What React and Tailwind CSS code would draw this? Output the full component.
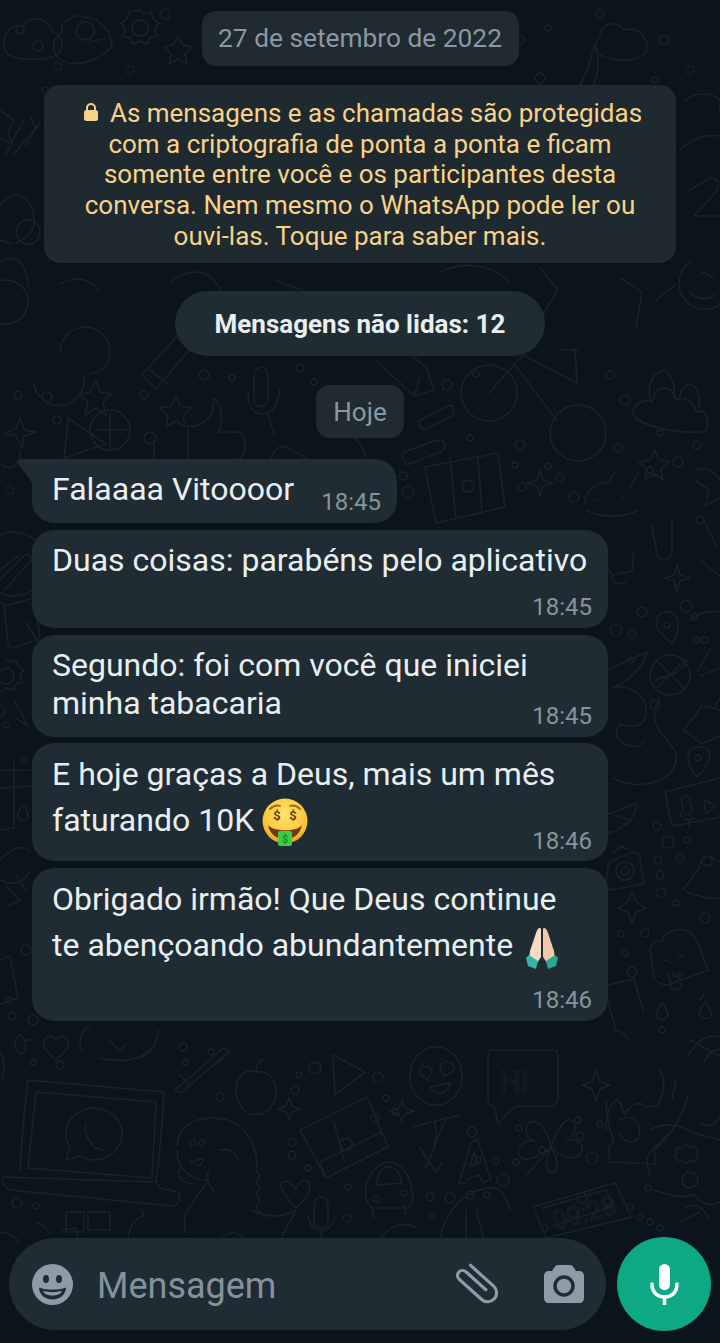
import React from 'react';

// wallpaper dots: x, y, r
const DOTS = [
  [38,46,5],[58,66,4],[45,90,3],[20,30,4],[130,70,4],[165,14,5],[520,40,4],[548,28,3],[540,78,5],[600,14,4],[664,40,5],[690,70,4],[655,80,3],
  [18,395,4],[47,397,5],[57,420,4],[144,395,4],[204,375,5],[232,378,3],[300,368,4],[314,382,3],[447,385,5],[476,374,3],[610,375,4],[625,400,5],
  [470,438,3],[520,445,5],[548,466,3],[618,448,4],[660,433,3],[697,445,4],[678,462,5],[515,465,3],[522,487,4],[560,478,4],[574,497,5],[650,470,3],
  [403,476,4],[408,492,6],[700,520,4],[10,490,4],
  [686,606,6],[642,612,5],[694,617,3],[616,630,6],[632,634,4],[696,640,3],[655,705,5],[631,660,3],[705,640,3],
  [657,826,4],[668,842,6],[687,840,3],[658,860,4],[660,875,4],[680,858,4],[661,893,5],[676,903,3],[705,918,5],[645,933,4],[621,934,3],[625,953,3],[632,972,5],[662,1030,3],
  [24,760,3],[26,950,5],[33,1020,5],[8,1000,3],
  [33,1062,3],[60,1065,4],[183,1047,4],[211,1052,3],[185,1062,3],[220,1097,4],[299,1075,3],[315,1068,6],[295,1090,4],[378,1077,5],[386,1098,3],[375,1118,4],[395,1112,3],[308,1168,3],[292,1142,4],[292,1155,4],
  [472,1132,5],[478,1160,3],[503,1180,6],[496,1161,3],[516,1162,3],[519,1128,3],[578,1120,3],[580,1136,4],[592,1158,6],[600,1124,3],[582,1198,5],[630,1207,3],[648,1188,3],[542,1150,3],[430,1197,4],[450,1198,5],[432,1216,3],[470,1195,4],[487,1195,3],[650,1222,3],
  [348,1187,3],[347,1218,4],[17,1203,5],[36,1206,3],[545,1228,3],[640,1217,3],[660,1228,3],
];

// wallpaper outlines, page coordinates
const DOODLES = [
  // top
  'M6 52c-8-14 4-30 18-26 6-12 26-8 28 6 12 2 14 20 2 24-8 4-42 6-48-4z',
  'M58 58c-8-10-4-22 4-26-2-12 14-20 26-14 12 0 24 14 24 28-14 18-42 22-54 12z',
  'M85 22a9 9 0 1 0 .1 0zM90 42l16-4',
  'M140 10l4 4 7-2 2 7 6 4-4 6 2 7-7 2-3 6-7-3-7 3-3-6-7-2 2-7-4-6 6-4 2-7zM140 20a8 8 0 1 0 .1 0z',
  'M178 36l5 9 9 2-7 7 2 10-9-5-9 5 2-10-7-7 9-2z',
  'M610 58c-14 0-18-14-10-22 0-14 18-16 24-6 14-4 26 8 22 22-4 8-26 10-36 6z',
  'M576 92c8-12 14-28 18-46 8 16 4 36-8 50-6 4-14 2-10-4z',
  'M24 120l-8 14-10 20M30 116l6 12-22 26M40 122l-14 24',
  'M0 110l14 10-6 12 4 12-12-6',
  'M690 190l20-12c8 0 10 6 6 14l-22 24h24M680 150c12-12 26-16 40-14M686 100c10-8 26-8 34 0v12',
  'M0 205c18-20 34-6 34 18 0 8-8 16-18 20M0 262c20-10 26 4 28 24M6 280a22 22 0 1 0 .1 0M28 220a12 12 0 1 0 .1 0',
  'M690 262a26 26 0 1 0 30 0M702 272l12 6M690 292c6 8 20 8 26 2M620 278l22 14-6 34M656 300l20-16M0 240l12 4',
  'M170 282c20-16 42-12 50 8M440 272c20-10 50-10 70 10M540 268l18 22-18 28M60 284c14-8 30-6 38 6M274 280l28 10',
  // middle
  'M34 384a24 24 0 0 0 50-8M60 352a22 22 0 0 1 50 0c0 12-8 20-20 22',
  'M96 380l4 12 12 2-9 8 3 13-10-7-11 7 3-13-9-8 12-2z',
  'M176 396l4 10 11 2-8 8 2 11-9-6-10 6 2-11-8-8 11-2z',
  'M142 375l34-38 14 12-34 40zM150 370l18 14',
  'M262 367c-6 0-8 6-8 12v22c0 8 14 8 14-2v-22c0-6-2-10-6-10zM248 392c0 14 6 22 14 22s16-6 18-26M268 414l6 20',
  'M214 398c8 8 10 22 4 34h20c6 0 8 10 6 20-2 6-8 10-14 10h-34c-8 0-8-6-8-14v-22c10 2 18-4 24-12z',
  'M68 418l-4 44M68 418l38 26-42 14M110 410a20 20 0 1 0 .1 0M110 414v34M96 430h34',
  'M20 418l4 12 12 2-12 4-2 12-6-12-12-2 12-6zM150 432a6 6 0 1 0 .1 0M154 440v26',
  'M378 362l36 34 20-6-8-22-28-26M414 396l6-18',
  'M420 420l28-14c6-2 8 6 4 10l-24 12c-6 3-12-2-8-8zM404 452l22-8 12-4c8 0 10 8 2 12l-30 12c-6 2-10-8-6-12z',
  'M310 460l-26-14c-8 0-14 10-16 20M300 462l-14 0-8 8M350 432c8 8 14 18 16 28',
  'M489 365a28 28 0 1 0 .1 0M578 405a28 28 0 1 0 .1 0M489 393l34-38 54 28-2-34M515 365l42 56M560 350l18 0',
  'M632 412c4-10 14-14 20-10 2-8 6-14 12-14s10 4 12 12c10-4 18 2 20 12 10-4 14 8 10 18-4 6-70 0-74-18zM650 400c-4-20 8-28 12-30s14 10 12 28M680 398c0-12 10-16 14-12s8 14 4 22',
  'M425 467l73-14 7 54-69 16zM450 458l6 62M478 456l4 58M468 480a6 6 0 1 0 .1 0',
  'M585 503c0-10 8-20 22-20l8-10M630 488l8-14M586 510c14 8 40 8 52 0M596 500h2M622 498h2',
  'M695 480l14 10-4 16 14-8M704 520l12 26M696 470c8-4 18 0 24 10',
  'M540 470l3 10 10 3-10 3-3 10-3-10-10-3 10-3z',
  'M655 450l4 10 10 2-8 7 2 11-8-6-10 5 2-10-8-7 11-2z',
  'M2 465c8 6 20 0 18-14M14 532a32 32 0 1 0 .1 0',
  // right side
  'M677 565l3 10 10 3-10 3-3 10-3-10-10-3 10-3z',
  'M600 555l12 20 20-4 2-20M612 575c0 8 8 12 14 6M651 524l7 34c4 4 14 2 14-8v-28',
  'M667 612c-10 0-13 10-9 18l14 14c6-8 8-20 4-28-2-3-5-4-9-4zM667 622a3 3 0 1 0 .1 0',
  'M670 655a20 20 0 1 0 .1 0M656 660l28 28M685 660l-28 28M655 680c8-4 26-4 32-20',
  'M607 670l40-18c-6 20-20 30-34 36M660 698c-6 10-8 20-2 30 6 12 20 18 18 34-4 20-40 30-62 16M618 687c18 0 30 12 28 28-2 8-8 14-22 10-6-2-10 6-6 14 6 8 22 10 26 2',
  'M700 676l20-8M684 730l18-24 18 4M684 730l18 14 18-8M724 692l-10 16',
  'M698 747c-10 0-12 12-8 20l6 10c8-6 14-14 14-24 0-4-6-6-12-6zM698 755a3 3 0 1 0 .1 0',
  'M665 792l55-14M665 792l6 30c2 4 4 4 8 3l41-8M686 796c-4 0-5 4-4 8l2 8c2 4 8 3 8-1l-2-10c0-3-2-5-4-5zM680 812c2 8 8 10 14 6M689 820v6M704 800l12 6-10 8z',
  'M607 815l30-12c-2 14-10 24-22 28l-8 4M600 835l10-4M615 815l16 6-8 4',
  'M609 862l24-10c4 0 7 2 7 6l4 26-34 6c-4-2-4-6-4-8zM625 862a9 9 0 1 0 .1 0M625 867a4 4 0 1 0 .1 0M614 852l8-6 6 4',
  'M632 890l4 12 10 6-10 4-4 12-4-12-10-4 10-6z',
  'M650 948l6-8 6 2 2-6c14-12 30-6 34 8l10 26-38 14c-8 2-14-2-16-6zM668 972l4 18 10-2-4-14M664 960l6 2M678 954l6 4M672 972c2 6 8 6 10 2',
  'M683 890l16-22c2-6 2-10 8-12 6 0 8 4 13 6M686 892c12 4 26 8 34 6M707 856a5 5 0 1 0 .1 0',
  'M662 1003c-3 4-6 8-6 12 0 6 12 6 12 0 0-4-3-8-6-12zM705 1002c-3 4-6 8-6 12 0 6 12 6 12 0 0-4-3-8-6-12z',
  'M608 985l26-6 10 34M608 1000l8 32M612 1030c8 0 14 4 16 10',
  'M700 560l20 16M690 620c10-8 20-10 30-8M710 650l-12 20',
  // left side
  'M0 580l24-24c4-4 10 2 6 6L4 590M0 570l18-14',
  'M4 606l30-8 6 40-26 10c-4 0-6-2-6-6zM4 606l-2-4M26 622l12 20',
  'M6 658l4 4 6-2 2 6 6 4-4 6 2 6-6 2-2 6-6-2-8 4M6 668a8 8 0 1 0 .1 0',
  'M0 770h30M0 788l32-2M14 762l0 66M0 830l14-2M24 806c-4 0-6 6-6 10 0 6 10 6 10 0 0-4-2-8-4-10z',
  'M0 706a5 5 0 1 0 .1 0M14 700l14 26-12-8M6 722a3 3 0 1 0 .1 0',
  'M0 860c14-16 28-14 30-8M0 880c14 8 24 0 30-8M6 886l14 14-12 6M26 890l-10-14',
  'M0 960l10-4 8 42-18 6M26 1040l8 0M12 1012a4 4 0 1 0 .1 0',
  // bottom
  'M0 1052c6 10 4 20 2 28M20 1034c-6 6-8 12 0 20 8-2 8-12 0-20zM56 1040c-6-8-14-2-12 6 2 6 6 8 12 14 6-6 12-10 12-16 0-8-8-10-12-4z',
  'M82 1050c-4-6-2-20 8-24M100 1058c18 4 34 4 50-6 6-8 8-14 8-22M108 1040l12 10 6-6M138 1058l10-8',
  'M28 1080l136 12c-2 30-4 62-8 90M28 1080c-4 30-6 62-8 90M36 1092l120 10-4 76-124-10zM2 1177l154 5 4 6 18 4c4 6 0 14-6 14L10 1190c-6-2-8-10-8-13z',
  'M94 1108c-16 0-28 12-28 26 0 6 2 10 4 14l-4 12 14-4c4 2 8 4 14 4 14 0 28-12 28-26s-12-26-28-26zM86 1124c-2 4 0 12 4 18s10 8 14 8',
  'M175 1090l6 3 49-42c-4-4-10-2-12 2zM230 1051l-12 12M180 1075l10 10',
  'M256 1072c-10-4-20 4-20 18 0 16 12 26 20 24 8 2 20-8 20-22 0-14-10-22-20-20zM256 1072c0-8 4-12 8-12',
  'M333 1055l32 17-30 23z',
  'M289 1098l3 8 8 3-8 3-3 8-3-8-8-3 8-3zM402 1100l3 8 9 3-9 3-3 8-3-8-9-3 9-3zM596 1070l4 12 10 3-10 4-4 12-4-12-10-4 10-3z',
  'M436 1047c-16 0-26 14-26 30 0 16 12 28 26 28s26-12 26-28c0-16-10-30-26-30zM424 1066c-4 0-6 6-2 10l6 4 4-8c0-4-4-6-8-6zM446 1062c-4 0-6 2-6 6l4 8 8-4c4-4 2-10-6-10zM430 1087l20-4c0 6-6 10-10 10s-8-2-10-6z',
  'M490 1050h62c4 0 6 2 6 6v42c0 4-2 6-6 8h-36l-18 17-4-17c-4 0-6-2-6-6v-44c0-4 2-6 2-6z',
  'M606 1130c0-14 4-26 10-30 6 0 6 10 8 14 6-10 18-14 22-6 4-4 14-2 12-2M620 1120c12-8 24 4 18 18-6 8-16 4-18-6M660 1070c6 12 4 24-2 34M672 1100l4-20M688 1096c-6 20-14 36-34 54l2 14-46-2-2-16c8-2 6-8 2-16-2-8-4-20-4-30',
  'M177 1146c0-16 12-28 36-28 28 0 44 22 44 50M180 1168c-4 10 4 16 14 16M210 1170c-4 0-4 12 4 22M177 1150c0 18 12 30 30 30 0 8-14 16-14 24-8 6-10 14-8 28M220 1150c8-2 16 2 18 10M256 1170l4 6-4 6 4 6-4 6 4 6-4 8 6 6M252 1210c12 8 30 8 44 0l-14 26',
  'M193 1140a3 3 0 1 0 .1 0M202 1140a3 3 0 1 0 .1 0M190 1162l14-4-4 8z',
  'M300 1130l67-33 21 50-62 31zM326 1178l-6-16 62-30M334 1122l10 38M346 1138a6 6 0 1 0 .1 0',
  'M296 1190c-8-14-20-8-14-2 2 6 8 14 14 20 6-6 14-14 14-22 0-6-10-10-14 4z',
  'M413 1127l46-12M435 1122c4 20-4 36-10 46M420 1148l16 24 6-10M445 1120l-12 30',
  'M459 1183l12-40 6-4 14 40-8 4-4-8-12 4-2 4zM474 1152l-4 14 8-2z',
  'M551 1147c-4-18-14-30-22-24-6 6-2 16 6 18-10-2-20 6-16 14 4 8 18 4 32-8M551 1147c6-16 14-32 22-26 6 6 0 16-6 20 12-4 18 6 14 12-6 8-18 6-30-6M551 1147c-6 14-6 24 0 26 8 0 8-14 0-26M551 1147l-24 28',
  'M372 1208c-6-6-8-14-6-22 2-10 10-22 22-24 12 0 22 12 24 28 2 8 0 14-4 18zM376 1185l26-2c-2-10-6-16-14-16s-10 8-12 18zM372 1208l2 10M404 1204l2 10M376 1196a3 3 0 1 0 .1 0M404 1190a3 3 0 1 0 .1 0',
  'M321 1197c-5 0-7 4-7 10v16c0 6 14 6 14 0v-16c0-6-2-10-7-10zM308 1216c2 10 6 14 13 14s12-4 14-14M321 1230v10',
  'M533 1207l82-24 16 34-85 21zM542 1208l64-18 8 16-62 20',
  'M650 1130c14-8 30-6 40 2l30 8M650 1176c-4-12-4-18 0-24l20-20M654 1190c12 4 30 10 40 4 4 8 16 14 26 8M690 1172a8 8 0 1 0 .1 0M682 1148c0-4 8-4 8 0 6-4 10 4 6 6 4 4 0 10-6 6 0 4-8 4-8 0-6 2-8-4-6-6-2-4 2-8 6-6z',
  'M686 1208c8-6 20 0 22 12M704 1062c4-10 12-14 16-12M688 1055c8-10 14-22 32-18',
  'M62 1230l14-2 2 14M66 1212h18v20H66zM88 1212h22v18H88zM128 1238c2-14 10-22 16-22l-2-6M36 1222l8 4 6 8M0 1232c8 0 16 4 18 10',
  'M440 1240c6-34 30-54 56-52 6 2 12 14 14 22M466 1240v-30M484 1240l-8-30M220 1240c10-10 18-10 24 0M380 1240c8-14 24-20 36-12',
  'M700 1000l4-6M690 1040l30 16M702 1124c8 4 14 0 18-8M680 1222l20-10',
];

function MoneyFace() {
  return (
    <svg viewBox="0 0 46 50" className="-my-[8px] inline-block h-[50px] w-[46px] align-middle" role="img" aria-label="🤑">
      <defs>
        <radialGradient id="moneyFace" cx="50%" cy="35%" r="65%">
          <stop offset="0%" stopColor="#fde56b" />
          <stop offset="75%" stopColor="#f9c53a" />
          <stop offset="100%" stopColor="#ee9a1e" />
        </radialGradient>
      </defs>
      <circle cx="23" cy="23" r="22.5" fill="url(#moneyFace)" />
      <path d="M8 11c3-3 7-4 10-3M28 8c3-1 7 0 10 3" stroke="#a4651a" strokeWidth="1.8" fill="none" strokeLinecap="round" />
      <text x="15" y="22" fontSize="13" fontWeight="700" fontFamily="Roboto" textAnchor="middle" fill="#6b3f12">$</text>
      <text x="31" y="22" fontSize="13" fontWeight="700" fontFamily="Roboto" textAnchor="middle" fill="#6b3f12">$</text>
      <path d="M6 27c5 7 30 7 34 0-2 10-9 14-17 14S8 37 6 27z" fill="#6e3a14" />
      <rect x="16" y="33" width="14" height="15" rx="2" fill="#3ecb45" />
      <text x="23" y="45" fontSize="10" fontWeight="700" fontFamily="Roboto" textAnchor="middle" fill="#128a2a">$</text>
    </svg>
  );
}

function PrayHands() {
  return (
    <svg viewBox="0 0 34 43" className="-my-[8px] ml-[4px] inline-block h-[43px] w-[34px] align-middle" role="img" aria-label="🙏">
      <path d="M15 2c-2 0-3 2-4 5L5 25l-1 8 8 4 4-6V4c0-1 0-2-1-2z" fill="#f6dcc4" />
      <path d="M19 2c2 0 3 2 4 5l6 18 1 8-8 4-4-6V4c0-1 0-2 1-2z" fill="#efc9ab" />
      <path d="M1 32l3-3 9 6-2 8-8-3z" fill="#36b5a5" />
      <path d="M33 32l-3-3-9 6 2 8 8-3z" fill="#2aa596" />
    </svg>
  );
}

function Bubble({ className, children }) {
  return <div className={`relative w-[576px] rounded-[22px] bg-[#1f2c33] pl-[20px] pr-[16px] text-[32px] text-[#e9eef0] ${className}`}>{children}</div>;
}

function Time({ children, className = '' }) {
  return <div className={`h-[28px] text-[24px] leading-[28px] text-[#87949c] ${className}`}>{children}</div>;
}

export default function App() {
  return (
    <div className="relative h-[1343px] w-[720px] overflow-hidden bg-[#0a141a] font-['Roboto',sans-serif]">
      <svg className="absolute inset-0 h-full w-full" viewBox="0 0 720 1343" fill="none" stroke="#17232a" strokeWidth="1.6" strokeLinecap="round" strokeLinejoin="round" aria-hidden="true">
        {DOODLES.map((d, i) => <path key={i} d={d} />)}
        {DOTS.map(([x, y, r], i) => <circle key={i} cx={x} cy={y} r={r} />)}
        <text x="514" y="1092" fontFamily="Roboto" fontSize="30" strokeWidth="1" textAnchor="middle">Hi</text>
        <text x="584" y="1222" fontFamily="Roboto" fontSize="26" strokeWidth="1" textAnchor="middle" transform="rotate(-15 584 1212)">09:28</text>
      </svg>

      <div className="relative flex h-full flex-col">
        <div className="flex flex-col items-center pt-[11px]">
          <div className="flex h-[55px] w-[317px] items-center justify-center rounded-[14px] bg-[#1f2a31] pt-[1px] text-[26.3px] text-[#8b98a1]">
            27 de setembro de 2022
          </div>

          <div className="mt-[19px] h-[178px] w-[632px] rounded-[16px] bg-[#1e2a30] px-[20px] pt-[13px] text-center text-[26px] leading-[30.7px] text-[#f8d288]">
            <svg viewBox="0 0 16 18" className="ml-[5px] mr-[11px] -mt-[6px] inline-block h-[18px] w-[16px] align-middle" aria-hidden="true">
              <path d="M4 8V5a4 4 0 0 1 8 0v3" fill="none" stroke="#f8d288" strokeWidth="2" />
              <rect x="1" y="7" width="14" height="11" rx="2.5" fill="#f8d288" />
            </svg>
            As mensagens e as chamadas são protegidas
            <br />
            com a criptografia de ponta a ponta e ficam
            <br />
            somente entre você e os participantes desta
            <br />
            conversa. Nem mesmo o WhatsApp pode ler ou
            <br />
            ouvi-las. Toque para saber mais.
          </div>

          <div className="mt-[28px] flex h-[65px] w-[370px] items-center justify-center rounded-full bg-[#1f2c33] pt-[2px] text-[26px] font-bold text-[#e9eef0]">
            Mensagens não lidas: 12
          </div>

          <div className="mt-[29px] flex h-[53px] w-[88px] items-center justify-center rounded-[14px] bg-[#1f2a31] pt-[1px] text-[26px] text-[#8b98a1]">
            Hoje
          </div>
        </div>

        <div className="mt-[21px] flex flex-col pl-[32px]">
          <Bubble className="!w-[365px] flex items-end justify-between rounded-tl-none pt-[11px]">
            <svg viewBox="0 0 16 26" className="absolute -left-[14px] top-0 h-[26px] w-[16px]" aria-hidden="true">
              <path d="M16 0H4C0 0-1 3 1 6l15 20z" fill="#1f2c33" />
            </svg>
            <div className="pb-[15px] leading-[38px]">Falaaaa Vitoooor</div>
            <Time className="mb-[7px]">18:45</Time>
          </Bubble>

          <Bubble className="mt-[7px] h-[98px] pt-[11px]">
            <div className="leading-[38px]">Duas coisas: parabéns pelo aplicativo</div>
            <Time className="mt-[14px] text-right">18:45</Time>
          </Bubble>

          <Bubble className="mt-[7px] flex items-end justify-between pt-[11px]">
            <div className="pb-[15px] leading-[38px]">Segundo: foi com você que iniciei<br />minha tabacaria</div>
            <Time className="mb-[7px]">18:45</Time>
          </Bubble>

          <Bubble className="mt-[6px] flex items-end justify-between pt-[8px]">
            <div className="min-w-0 flex-1 whitespace-nowrap pb-[18px] leading-[46px]">E hoje graças a Deus, mais um mês<br />faturando 10K <MoneyFace /></div>
            <Time className="mb-[6px]">18:46</Time>
          </Bubble>

          <Bubble className="mt-[7px] pb-[7px] pt-[8px]">
            <div className="whitespace-nowrap leading-[46px]">Obrigado irmão! Que Deus continue<br />te abençoando abundantemente <PrayHands /></div>
            <Time className="mt-[18px] text-right">18:46</Time>
          </Bubble>
        </div>

        <div className="mt-auto flex items-center pb-[12px] pl-[9px]">
          <div className="flex h-[92px] w-[597px] items-center rounded-[46px] bg-[#1f2c33] pl-[23px]">
            <svg viewBox="0 0 41 41" className="h-[41px] w-[41px] shrink-0" aria-hidden="true">
              <circle cx="20.5" cy="20.5" r="20.5" fill="#8f9ca5" />
              <ellipse cx="14" cy="15" rx="3" ry="4" fill="#1f2c33" />
              <ellipse cx="27" cy="15" rx="3" ry="4" fill="#1f2c33" />
              <path d="M7 23.5c8 3 19 3 27 0 0 7-6 12-13.5 12S7 30.5 7 23.5z" fill="#1f2c33" />
              <path d="M11 27c6 1.5 13 1.5 19 0-1 3-5 4.5-9.5 4.5S12 30 11 27z" fill="#8f9ca5" />
            </svg>
            <span className="ml-[24px] pt-[3px] text-[36px] text-[#84929b]">Mensagem</span>
            <svg viewBox="0 0 41 36" className="ml-auto -translate-x-[2px] h-[36px] w-[41px] shrink-0 overflow-visible" fill="none" stroke="#8f9ca5" strokeWidth="2.8" strokeLinecap="round" aria-hidden="true">
              <g transform="translate(20.5 18) rotate(-48) scale(1.12)">
                <path d="M-3 -11V13a4.5 4.5 0 0 0 9 0V-14a8 8 0 0 0-16 0V14" transform="rotate(180)" />
              </g>
            </svg>
            <svg viewBox="0 0 40 38" className="ml-[47px] mr-[22px] h-[38px] w-[40px] shrink-0" aria-hidden="true">
              <path d="M14 0h12c2 0 3 1 4 3l2 3h3c3 0 5 2 5 5v22c0 3-2 5-5 5H5c-3 0-5-2-5-5V11c0-3 2-5 5-5h3l2-3c1-2 2-3 4-3z" fill="#8f9ca5" />
              <circle cx="20" cy="21" r="9" fill="#8f9ca5" stroke="#1f2c33" strokeWidth="3.5" />
            </svg>
          </div>
          <div className="ml-[11px] flex h-[94px] w-[94px] shrink-0 items-center justify-center rounded-full bg-[#0ea884]">
            <svg viewBox="0 0 29 41" className="h-[41px] w-[29px]" aria-hidden="true">
              <rect x="9" y="0" width="11" height="26" rx="5.5" fill="#fff" />
              <path d="M2 20c0 8 5 13 12.5 13S27 28 27 20" fill="none" stroke="#fff" strokeWidth="3.5" strokeLinecap="round" />
              <path d="M14.5 32v9" stroke="#fff" strokeWidth="3.5" />
            </svg>
          </div>
        </div>
      </div>
    </div>
  );
}
